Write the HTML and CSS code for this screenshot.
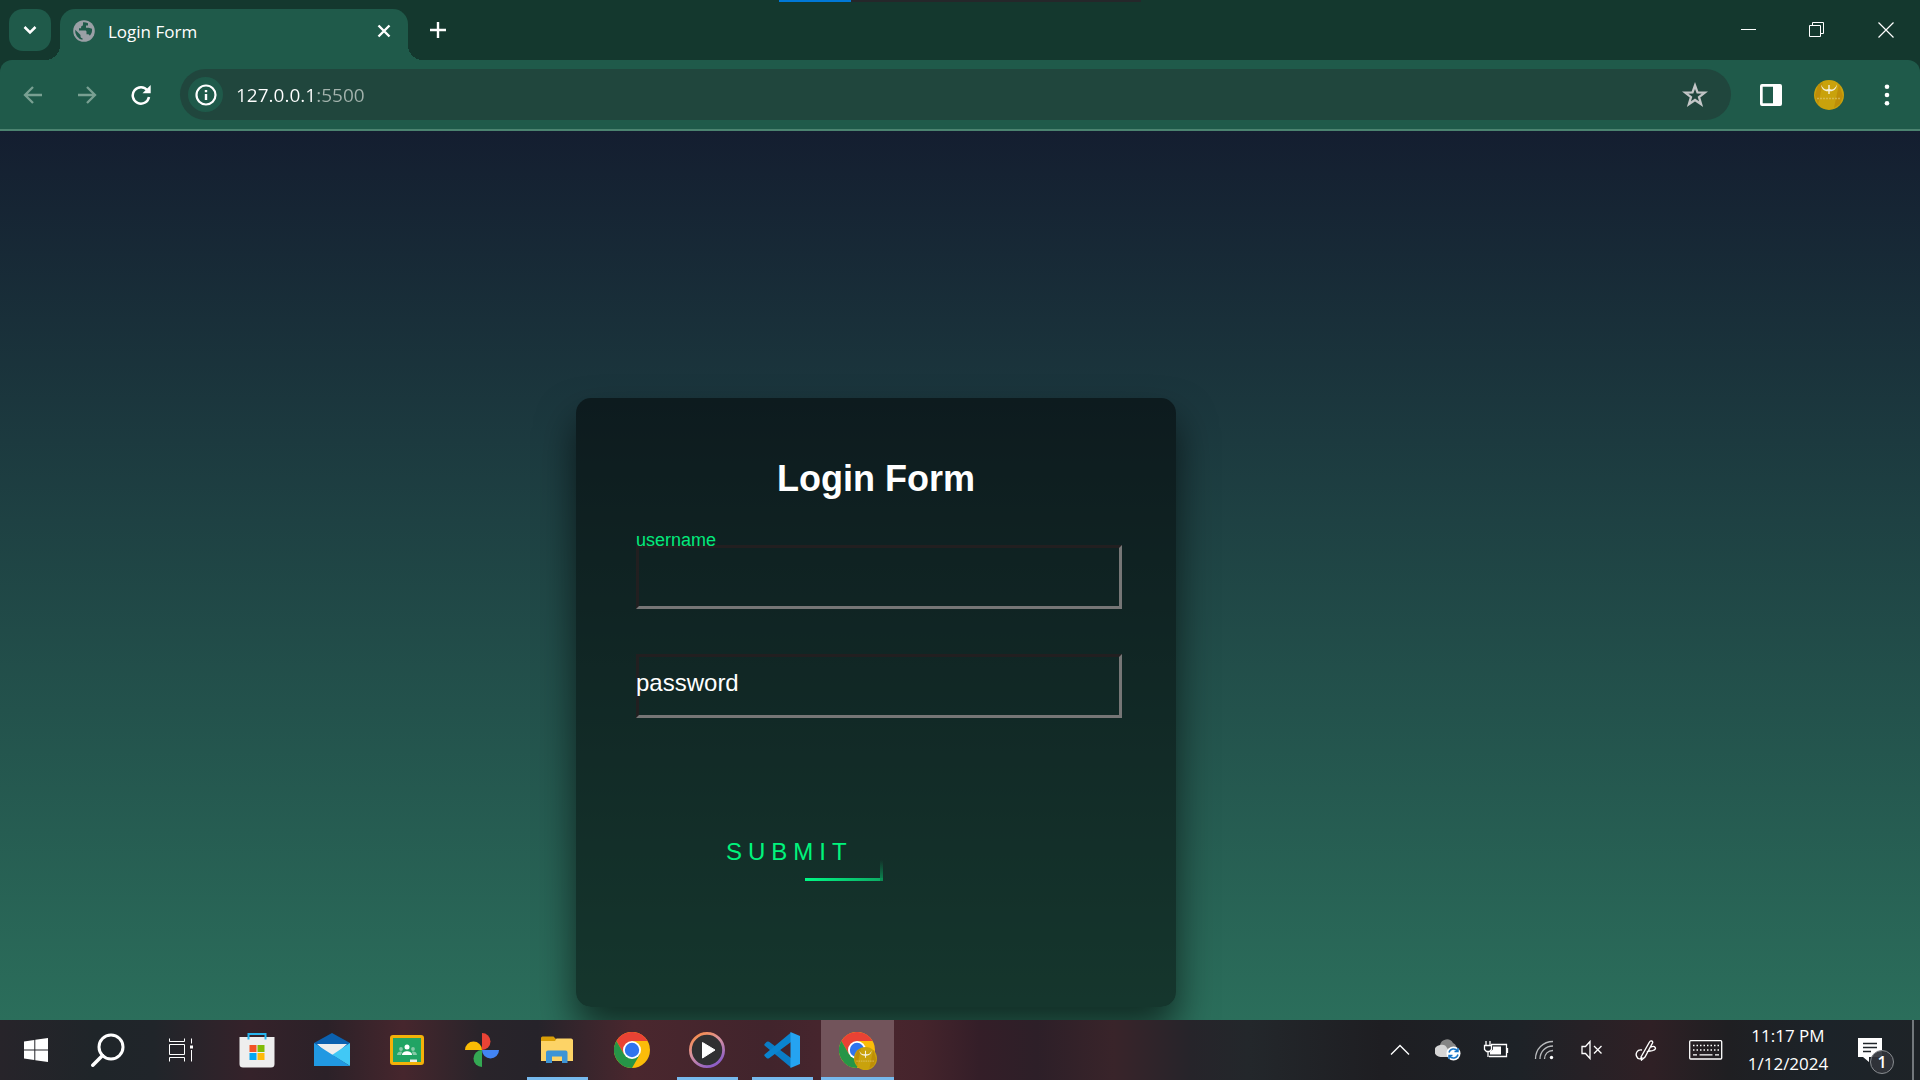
FILE: index.html
```html
<!DOCTYPE html>
<html lang="en">
<head>
<meta charset="utf-8">
<title>Login Form</title>
<link rel="stylesheet" href="styles.css">
</head>
<body>
<svg class="defs" width="0" height="0" aria-hidden="true">
  <defs>
    <symbol id="chrome" viewBox="0 0 36 36">
      <circle cx="18" cy="18" r="18" fill="#fbbc09"/>
      <path d="M18 18V9h15.600A18 18 0 0 0 2.400 9L10.200 22.500z" fill="#e94234"/>
      <path d="M18 18L10.200 22.500 2.400 9A18 18 0 0 0 18 36l7.800-13.500z" fill="#269547"/>
      <circle cx="18" cy="18" r="9" fill="#fff"/>
      <circle cx="18" cy="18" r="7.200" fill="#2f74ee"/>
    </symbol>
    <symbol id="avatar" viewBox="0 0 30 30">
      <circle cx="15" cy="15" r="15" fill="#c9a20c"/>
      <path d="M4 5L1 15l3 10L9 2zM25 4l-5 24 6-4 3-8z" fill="#b98605" opacity=".7"/>
      <path d="M7 4.500c2 5 5 5.500 7.300 4.500V5h1.400v4c2.300 1 5.300.5 7.300-4.500-.5 4.500-3 7-7.300 6.800V14h-1.400v-2.700C10 11.500 7.500 9 7 4.500z" fill="#f5f0de"/>
      <path d="M3 18.500h24" stroke="#ddc368" stroke-width="1.500" stroke-dasharray="2 1" opacity=".7"/>
    </symbol>
  </defs>
</svg>

<header class="browser">
  <div class="share-bar"></div>
  <div class="tab-strip">
    <button class="tab-search" aria-label="Search tabs"><svg width="42" height="42" viewBox="0 0 42 42"><path d="M15.500 18l5.500 5.500 5.500-5.500" fill="none" stroke="#fff" stroke-width="2.500"/></svg></button>
    <div class="tab">
      <svg width="22" height="22" viewBox="0 0 22 22"><circle cx="11" cy="11" r="10.800" fill="#9aa0a6"/><path d="M10 2.200v2.300c0 1-.8 1.800-1.900 1.800v2H6v2.200h6.300c.7 0 1.200.6 1.200 1.300v2.500h1.300c1 0 1.700.6 2 1.500 1.600-1.700 2.600-4 2.200-7l-3.300-1H13V5.500h2V3.200A9 9 0 0 0 10 2.200zM2.200 9.800L7.500 15v1.200c0 1.100.8 2 2 2v1.600A9 9 0 0 1 2.200 9.800z" fill="#1f5a4a"/></svg>
      <span class="tab-title">Login Form</span>
      <button class="tab-close" aria-label="Close tab"><svg width="14" height="14" viewBox="0 0 14 14"><path d="M1.500 1.500l11 11m0-11l-11 11" stroke="#fff" stroke-width="2.400"/></svg></button>
    </div>
    <button class="new-tab" aria-label="New tab"><svg width="16" height="16" viewBox="0 0 16 16"><path d="M8 0v16M0 8h16" stroke="#fff" stroke-width="2.400"/></svg></button>
    <div class="window-controls">
      <button aria-label="Minimize"><svg width="16" height="16" viewBox="0 0 16 16"><path d="M1 7.500h15" stroke="#fff"/></svg></button>
      <button aria-label="Restore"><svg width="16" height="16" viewBox="0 0 16 16"><path d="M.5 3.500h11v11H.5zM3.500 3.500v-3h11v11h-3" fill="none" stroke="#fff"/></svg></button>
      <button aria-label="Close"><svg width="16" height="16" viewBox="0 0 16 16"><path d="M.5 .5l15 15m0-15l-15 15" stroke="#fff" stroke-width="1.200"/></svg></button>
    </div>
  </div>
  <div class="toolbar">
    <button class="tool" aria-label="Back"><svg width="20" height="20" viewBox="0 0 20 20"><path d="M19 10H2.500M10 2L2 10l8 8" fill="none" stroke="#79a092" stroke-width="2.300"/></svg></button>
    <button class="tool" aria-label="Forward"><svg width="20" height="20" viewBox="0 0 20 20"><path d="M1 10h16.500M10 2l8 8-8 8" fill="none" stroke="#79a092" stroke-width="2.300"/></svg></button>
    <button class="tool" aria-label="Reload"><svg width="20" height="20" viewBox="0 0 20 20"><path d="M16.500 5.500A8.200 8.200 0 1 0 18 12" fill="none" stroke="#fff" stroke-width="2.500"/><path d="M19.700 0v8.200h-8.200z" fill="#fff"/></svg></button>
    <div class="omnibox">
      <button class="site-info" aria-label="Site information"><svg width="22" height="22" viewBox="0 0 22 22"><circle cx="11" cy="11" r="9.500" fill="none" stroke="#fff" stroke-width="2.200"/><path d="M11 10v6M11 6v2.200" stroke="#fff" stroke-width="2.400"/></svg></button>
      <input class="address" type="text" value="127.0.0.1:5500" aria-label="Address">
      <button class="bookmark" aria-label="Bookmark"><svg width="26" height="26" viewBox="0 0 26 26"><path d="M13 3.500l2.500 6.900 7.300.2-5.800 4.500 2.100 7.100-6.100-4.200-6.100 4.200L9 15.100 3.200 10.600l7.300-.2z" fill="none" stroke="#c3c6c7" stroke-width="2.300"/></svg></button>
    </div>
    <button class="tool" aria-label="Side panel"><svg width="22" height="22" viewBox="0 0 22 22"><path d="M2 0h18a2 2 0 0 1 2 2v18a2 2 0 0 1-2 2H2a2 2 0 0 1-2-2V2a2 2 0 0 1 2-2zm.700 2.700v16.600H13V2.700z" fill="#fff" fill-rule="evenodd"/></svg></button>
    <button class="tool" aria-label="Profile"><svg width="30" height="30"><use href="#avatar"/></svg></button>
    <button class="tool" aria-label="Menu"><svg width="6" height="22" viewBox="0 0 6 22"><g fill="#fff"><circle cx="3" cy="2.700" r="2.300"/><circle cx="3" cy="11" r="2.300"/><circle cx="3" cy="19.300" r="2.300"/></g></svg></button>
  </div>
</header>

<main class="page">
  <form class="login">
    <h1 class="login-title">Login Form</h1>
    <div class="field field-raised">
      <input type="text" id="username">
      <label for="username">username</label>
    </div>
    <div class="field">
      <input type="password" id="password">
      <label for="password">password</label>
    </div>
    <button class="submit" type="button">SUBMIT</button>
  </form>
</main>

<footer class="taskbar">
  <nav class="apps" aria-label="Taskbar">
    <button class="system" aria-label="Start"><svg width="24" height="24" viewBox="0 0 24 24"><path d="M0 3.400L10.300 2v9.500H0zM11.300 1.800L24 0v11.500H11.300zM0 12.500h10.300V22L0 20.600zM11.300 12.500H24V24l-12.700-1.800z" fill="#fff"/></svg></button>
    <button class="system" aria-label="Search"><svg width="34" height="34" viewBox="0 0 34 34"><circle cx="20" cy="14" r="12" fill="none" stroke="#fff" stroke-width="3"/><path d="M11.500 22.500L1.800 32.200" stroke="#fff" stroke-width="3.500" stroke-linecap="round"/></svg></button>
    <button class="app" aria-label="Task view"><svg width="26" height="24" viewBox="0 0 26 24"><path d="M.5 .5v3h15v-3M.5 6.500h15v10H.5zM.5 23.500v-4h15v4M22.500 .500v5M22.500 12v11.500" fill="none" stroke="#fff"/><path d="M21 7.500h3v3h-3z" fill="#fff"/></svg></button>
    <button class="app" aria-label="Store"><svg width="36" height="36" viewBox="0 0 36 36"><path d="M.5 5h35v27a3.500 3.500 0 0 1-3.500 3.500H4A3.500 3.500 0 0 1 .5 32z" fill="#eee"/><path d="M9.500 7.500V2h17v5.500" fill="none" stroke="#27b5ef" stroke-width="2"/><path d="M10.500 13h7v7h-7z" fill="#f35325"/><path d="M18.500 13h7v7h-7z" fill="#81bc06"/><path d="M10.500 21h7v7h-7z" fill="#05a6f0"/><path d="M18.500 21h7v7h-7z" fill="#ffba08"/></svg></button>
    <button class="app" aria-label="Mail"><svg width="36" height="36" viewBox="0 0 36 36"><path d="M0 11L18 1l18 10-4 5H4z" fill="#0b61b0"/><path d="M3 12h30L18 26z" fill="#eee"/><path d="M36 11v23L18 23z" fill="#41c8f5"/><path d="M0 11l36 23H0z" fill="#2199e2"/></svg></button>
    <button class="app" aria-label="Classroom"><svg width="34" height="30" viewBox="0 0 34 30"><rect x="1.500" y="1.500" width="31" height="27" rx="1.500" fill="#21a464" stroke="#f3b109" stroke-width="3"/><circle cx="17" cy="12" r="2.500" fill="#fff"/><path d="M12 20c0-5 10-5 10 0z" fill="#fff"/><g fill="#85caa7"><circle cx="11" cy="14" r="1.900"/><circle cx="23" cy="14" r="1.900"/><path d="M7 20c0-4 5-4 5-3l-1 3zM27 20c0-4-5-4-5-3l1 3z"/></g><path d="M20 24.500h7v2.500h-7z" fill="#e6eee9"/></svg></button>
    <button class="app" aria-label="Photos"><svg width="34" height="34" viewBox="0 0 34 34"><path d="M17 0a8.500 8.500 0 0 1 0 17z" fill="#ea4335"/><path d="M34 17a8.500 8.500 0 0 1-17 0z" fill="#4285f4"/><path d="M17 34a8.500 8.500 0 0 1 0-17z" fill="#34a853"/><path d="M0 17a8.500 8.500 0 0 1 17 0z" fill="#fbbc04"/></svg></button>
    <button class="app is-open" aria-label="File Explorer"><svg width="32" height="30" viewBox="0 0 32 30"><path d="M0 3a1.500 1.500 0 0 1 1.500-1.500h11L15 4v3H0z" fill="#d99e07"/><path d="M0 6h14l1.500-2.500H30A2 2 0 0 1 32 5v21H0z" fill="#fdd366"/><path d="M5 28V17.500a2 2 0 0 1 2-2h17.500a2 2 0 0 1 2 2V28h-5.500v-6.500H11V28z" fill="#3d94d6"/></svg></button>
    <button class="app" aria-label="Chrome"><svg width="36" height="36"><use href="#chrome"/></svg></button>
    <button class="app is-open" aria-label="Media Player"><svg width="36" height="36" viewBox="0 0 36 36"><defs><linearGradient id="ring" x2=".6" y2="1"><stop offset="0" stop-color="#ff8a38"/><stop offset=".5" stop-color="#d893a0"/><stop offset="1" stop-color="#8f5fc5"/></linearGradient></defs><circle cx="18" cy="18" r="16.600" fill="#303032" stroke="url(#ring)" stroke-width="2.800"/><path d="M13.500 10.500L26 18l-12.500 8z" fill="#fff" stroke="#fff" stroke-linejoin="round"/></svg></button>
    <button class="app is-open" aria-label="Visual Studio Code"><svg width="36" height="36" viewBox="0 0 36 36"><path d="M.8 11.800l2-2a2 2 0 0 1 2.300 0L27 26v9.500L.8 13.800a1.400 1.400 0 0 1 0-2z" fill="#0a7cc5"/><path d="M.8 24.200l2 2a2 2 0 0 0 2.300 0L27 10V.5L.8 22.200a1.400 1.400 0 0 0 0 2z" fill="#0a84cf"/><path d="M26.500 0L36 4v28l-9.500 4z" fill="#25a3f1"/></svg></button>
    <button class="app is-open is-active" aria-label="Chrome, Login Form"><svg width="38" height="40" viewBox="0 0 38 40"><use href="#chrome" x="0" y="2" width="36" height="36"/><use href="#avatar" x="15" y="17" width="23" height="23"/></svg></button>
  </nav>
  <div class="tray">
    <button aria-label="Show hidden icons"><svg width="20" height="12" viewBox="0 0 20 12"><path d="M1 10.500l9-9 9 9" fill="none" stroke="#fff" stroke-width="1.400"/></svg></button>
    <button aria-label="OneDrive"><svg width="26" height="24" viewBox="0 0 26 24"><path d="M5 7a7 7 0 0 1 13-2 6 6 0 0 1 3 8L5 14z" fill="#858585"/><path d="M6 19a6 6 0 0 1-1-12c3-1 6 0 7 3l6 8-2 1z" fill="#d5d5d5"/><circle cx="18.500" cy="15.500" r="7" fill="#fff"/><path d="M14 14.500a4.800 4.800 0 0 1 8.500-1.500M23 16.500a4.800 4.800 0 0 1-8.500 1.500M23 10v3.500h-3.500M14 21v-3.500h3.500" fill="none" stroke="#1676c9" stroke-width="1.500"/></svg></button>
    <button aria-label="Battery"><svg width="26" height="20" viewBox="0 0 26 20"><path d="M8 4.500h15.500v12H6M24.500 8v5M1.500 5.500h7v4l-2 2h-3l-2-2zM3 5V1M7 5V1M5 11.500V17" fill="none" stroke="#fff" stroke-width="1.300"/><path d="M10 6.500h8v8H7v-3l3-2z" fill="#fff"/></svg></button>
    <button aria-label="Wi-Fi"><svg width="20" height="20" viewBox="0 0 20 20"><path d="M1.500 19C1.500 9 9 1.500 19 1.500M6 19C6 11.500 11.500 6 19 6M10.500 19c0-5 3.500-8.500 8.500-8.500" fill="none" stroke="#b9bbbd" stroke-width="1.300"/><circle cx="17.500" cy="17.500" r="1.700" fill="#fff"/></svg></button>
    <button aria-label="Muted"><svg width="22" height="20" viewBox="0 0 22 20"><path d="M1 6.500h3.500L9 1.500v17l-4.500-5H1zM13 6l7.500 7.500m0-7.500L13 13.500" fill="none" stroke="#fff" stroke-width="1.300"/></svg></button>
    <button class="wide" aria-label="Windows Ink"><svg width="22" height="22" viewBox="0 0 22 22"><path d="M6 18L14.500 3c1-2 4-1 3 1L10 18l-3.500 3zM7 11c-5-1-7 4-5 7 1 3 5 2 5 0M16 8c4-2 6 2 3 3-3 2-5 0-7 2" fill="none" stroke="#fff" stroke-width="1.400"/></svg></button>
    <button class="wide" aria-label="Touch keyboard"><svg width="34" height="20" viewBox="0 0 34 20"><rect x=".7" y=".7" width="32" height="18.300" rx="1" fill="none" stroke="#fff" stroke-width="1.300"/><path d="M4 5.500h26M4 10h26" stroke="#fff" stroke-width="1.500" stroke-dasharray="1.500 2"/><path d="M4 14.800h4M10.500 14.800h13M26 14.800h4" stroke="#fff" stroke-width="1.300"/></svg></button>
    <button class="clock"><time>11:17 PM</time><time>1/12/2024</time></button>
    <button class="notices" aria-label="Notifications"><svg width="36" height="36" viewBox="0 0 36 36"><path d="M0 0h24v19H11v5l-6-5H0z" fill="#fff"/><path d="M5 5.500h14M5 9.500h14M5 13.500h8" stroke="#20262b" stroke-width="1.300"/><circle cx="24" cy="24" r="11.500" fill="#30343a" fill-opacity=".93" stroke="#888c90"/></svg><span class="badge">1</span></button>
    <button class="show-desktop" aria-label="Show desktop"></button>
  </div>
</footer>
</body>
</html>
```
FILE: styles.css
```css
* { box-sizing: border-box; }

body {
  margin: 0;
  min-height: 100vh;
  display: flex;
  flex-direction: column;
  font-family: "Liberation Sans", Arial, sans-serif;
  color: #fff;
}

button {
  padding: 0;
  border: 0;
  background: none;
  color: inherit;
  font: inherit;
  display: flex;
  align-items: center;
  justify-content: center;
}

svg { display: block; flex: none; }
.defs { position: absolute; }

/* Browser window */
.browser {
  position: relative;
  background: #14382e;
  font-family: "Open Sans", "Noto Sans", sans-serif;
}

.share-bar {
  position: absolute;
  top: 0;
  left: 779px;
  width: 362px;
  height: 2px;
  background: linear-gradient(to right, #0078d7 72px, #25272a 72px);
}

.tab-strip {
  display: flex;
  align-items: flex-start;
  height: 60px;
  padding: 9px 0 0 9px;
}

.tab-search {
  width: 42px;
  height: 42px;
  border-radius: 14px;
  background: #1f5a4a;
}

.tab {
  position: relative;
  display: flex;
  align-items: center;
  width: 348px;
  height: 51px;
  margin-left: 9px;
  padding: 0 17px 8px 13px;
  border-radius: 15px 15px 0 0;
  background: #1f5a4a;
}

.tab::before,
.tab::after {
  content: "";
  position: absolute;
  bottom: 0;
  width: 15px;
  height: 15px;
}

.tab::before {
  right: 100%;
  background: radial-gradient(circle at 0 0, transparent 15px, #1f5a4a 15px);
}

.tab::after {
  left: 100%;
  background: radial-gradient(circle at 100% 0, transparent 15px, #1f5a4a 15px);
}

.tab-title {
  flex: 1;
  padding: 2px 0 0 13px;
  font-size: 17px;
  line-height: 24px;
}

.new-tab {
  width: 42px;
  height: 42px;
  margin-left: 9px;
}

.window-controls {
  display: flex;
  margin-left: auto;
}

.window-controls button {
  width: 69px;
  height: 42px;
}

.toolbar {
  display: flex;
  align-items: center;
  gap: 4px;
  height: 71px;
  padding: 0 6px;
  border-bottom: 2px solid #4b8370;
  border-radius: 12px 12px 0 0;
  background: #1f5a4a;
}

.tool {
  width: 54px;
  height: 51px;
}

.tool:nth-child(-n+3) { margin-right: -4px; }

.omnibox {
  flex: 1;
  display: flex;
  align-items: center;
  height: 51px;
  margin: 0 9px 0 12px;
  padding: 0 23px 0 8px;
  border-radius: 26px;
  background: #20463d;
}

.site-info {
  width: 35px;
  height: 35px;
  border-radius: 50%;
  background: #1f5a4a;
}

.address {
  flex: 1;
  min-width: 0;
  height: 30px;
  margin-left: 13px;
  padding: 0;
  border: 0;
  background: linear-gradient(to right, #fff 81px, #a3b3ad 81px);
  background-clip: text;
  color: transparent;
  font-family: inherit;
  font-size: 19px;
}

/* Page */
.page {
  flex: 1;
  overflow: hidden;
  background: linear-gradient(#141e30, #2b6e5b);
}

.login {
  width: 600px;
  margin: 267px 0 0 30%;
  padding: 60px 60px 126px;
  border-radius: 15px;
  background: rgba(0, 0, 0, 0.5);
  box-shadow: 0 22px 38px rgba(0, 0, 0, 0.6);
}

.login-title {
  margin: 0 0 45px;
  font-size: 36px;
  line-height: 42px;
  text-align: center;
}

.field {
  position: relative;
  margin-bottom: 45px;
}

.field input {
  display: block;
  box-sizing: content-box;
  width: 100%;
  height: 58px;
  padding: 0;
  border: 3px solid;
  border-color: #221f20 #767676 #767676 #221f20;
  background: transparent;
  color: #fff;
  font: inherit;
  font-size: 24px;
}

.field label {
  position: absolute;
  top: 15px;
  left: 0;
  font-size: 24px;
  line-height: 27px;
}

.field-raised label {
  top: -15px;
  color: #03e97b;
  font-size: 18px;
  line-height: 21px;
}

.submit {
  position: relative;
  margin: 105px 0 0 60px;
  padding: 15px 30px;
  color: #00f47c;
  font-size: 24px;
  line-height: 28px;
  letter-spacing: 6px;
}

.submit::before,
.submit::after {
  content: "";
  position: absolute;
  right: 0;
  bottom: 0;
}

.submit::before {
  width: 78px;
  height: 3px;
  background: linear-gradient(to right, #00f985, #0eaa64);
}

.submit::after {
  width: 3px;
  height: 21px;
  background: linear-gradient(transparent, #0b8a52);
}

/* Taskbar */
.taskbar {
  display: flex;
  justify-content: space-between;
  height: 60px;
  background: linear-gradient(to right, #27242a 0, #1f2529 5%, #20252a 8%, #35222a 13%, #2b2128 17%, #46262d 21%, #29242a 25%, #26232a 28%, #4a272e 33%, #41242c 40%, #4a262e 45%, #45242c 48%, #341e28 51%, #2d1f28 54%, #39242a 58%, #26242a 62%, #23272b 65%, #1e1e22 72%, #1d2227 79%, #2f2025 86%, #1f1f22 90%, #1c2329 95%, #1e2327 100%);
  font-family: "Open Sans", "Noto Sans", sans-serif;
}

.apps, .tray { display: flex; }
.system { width: 72px; }

.app {
  position: relative;
  width: 75px;
}

.is-open::after {
  content: "";
  position: absolute;
  bottom: 0;
  left: 8px;
  right: 6px;
  height: 3px;
  background: #76b9ed;
}

.is-active {
  border-left: 2px solid transparent;
  background: #72545b padding-box;
}

.is-active::after { left: 0; right: 0; }

.tray button { width: 48px; }
.tray .wide { width: 60px; }

.tray .clock {
  flex-direction: column;
  width: 104px;
  font-size: 17px;
  line-height: 28px;
}

.tray .notices {
  position: relative;
  width: 72px;
  padding-top: 12px;
}

.badge {
  position: absolute;
  left: 30px;
  top: 30px;
  width: 24px;
  font-size: 16px;
  font-weight: 600;
  line-height: 24px;
  text-align: center;
}

.tray .show-desktop {
  width: 8px;
  border-left: 2px solid #73787c;
}
```
